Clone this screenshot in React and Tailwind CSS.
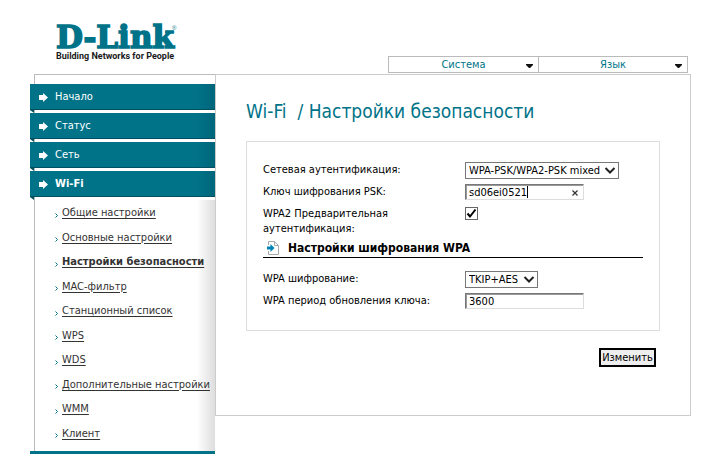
import React, { useState } from 'react';

const sections = ['Начало', 'Статус', 'Сеть', 'Wi-Fi'];

const wifiPages = [
  'Общие настройки',
  'Основные настройки',
  'Настройки безопасности',
  'MAC-фильтр',
  'Станционный список',
  'WPS',
  'WDS',
  'Дополнительные настройки',
  'WMM',
  'Клиент',
];

const Logo = () => (
  <a href="#" aria-label="D-Link" className="block pt-[22px] pl-[26px]">
    <svg width="130" height="42" viewBox="0 0 130 42" className="overflow-visible">
      <text x="0" y="26" fill="#007389" stroke="#007389" strokeWidth="1.6" fontSize="31" fontWeight="700" fontFamily="'DejaVu Serif', serif">
        D-Link
      </text>
      <text x="116" y="8" fill="#007389" fontSize="6" fontFamily="'Liberation Sans', sans-serif">®</text>
      <text x="0" y="37" fill="#1a1a1a" fontSize="9" fontWeight="700" fontFamily="Roboto, sans-serif">
        Building Networks for People
      </text>
    </svg>
  </a>
);

const TopMenu = ({ label, className }) => (
  <button type="button" className={`flex h-[17px] items-center border border-[#bbb] bg-white text-[#007389] ${className}`}>
    <span className="flex-1 pt-[2px] text-center">{label}</span>
    <svg width="7" height="4" viewBox="0 0 7 4" className="mt-[3px] mr-[5px] -ml-3">
      <path d="M0 0h7v1L4 4H3L0 1z" fill="#111" />
    </svg>
  </button>
);

const NavItem = ({ label, active }) => (
  <li className="relative mb-[3px]">
    <a
      href="#"
      className={`flex h-[26px] items-center border-b border-[#00505f] bg-linear-to-r from-[#007389] from-90% to-[#00657a] pt-[2px] pl-2 text-white ${active ? 'font-bold' : ''}`}
    >
      <svg width="10" height="9" viewBox="0 0 10 9" className="mr-[7px]">
        <path d="M1 2h4V0l5 4.5L5 9V7H1z" fill="#fff" />
      </svg>
      {label}
    </a>
    {/* folded corner */}
    <svg width="4" height="3" viewBox="0 0 4 3" className="absolute top-full left-0">
      <path d="M0 0h4v3z" fill="#00505f" />
    </svg>
  </li>
);

const SubItem = ({ label, active }) => (
  <li className="flex flex-1 items-center">
    <svg width="3" height="5" viewBox="0 0 3 5" className="mt-1 mr-1">
      <path d="M0.5 0.5l2 2-2 2" fill="none" stroke="#007389" />
    </svg>
    <a href="#" className={`whitespace-nowrap text-[#333] underline underline-offset-2 ${active ? 'font-bold' : ''}`}>
      {label}
    </a>
  </li>
);

const Sidebar = () => (
  <aside className="flex w-[185px] shrink-0 flex-col border-b-[3px] border-[#007389]">
    <div className="ml-1 border-t border-l border-[#bbb] pt-[9px]">
      <ul className="-ml-[5px]">
        {sections.map((s) => (
          <NavItem key={s} label={s} active={s === 'Wi-Fi'} />
        ))}
      </ul>
      <div className="bg-linear-to-l from-[#ddd] to-white to-10% pt-px pb-[5px]">
        <ul className="flex h-[245px] flex-col pl-5">
          {wifiPages.map((p) => (
            <SubItem key={p} label={p} active={p === 'Настройки безопасности'} />
          ))}
        </ul>
      </div>
    </div>
  </aside>
);

const Field = ({ id, label, children, className = 'h-[22px]' }) => (
  <div className={`flex items-start ${className}`}>
    <label htmlFor={id} className="w-[202px] shrink-0 pt-[2px] leading-[15px] whitespace-pre-line">
      {label}
    </label>
    {children}
  </div>
);

const Select = ({ id, value, className }) => (
  <div className={`relative mt-[2px] ${className}`}>
    <select id={id} defaultValue={value} className="block h-[17px] w-full appearance-none border border-[#777] bg-white pl-[3px] leading-[15px] outline-none">
      <option>{value}</option>
    </select>
    <svg width="12" height="8" viewBox="0 0 12 8" className="pointer-events-none absolute top-[5px] right-[3px]">
      <path d="M1.5 1l4.5 4.5L10.5 1" fill="none" stroke="#222" strokeWidth="2" />
    </svg>
  </div>
);

const inputClass =
  'block h-4 w-full border border-t-[#777] border-r-[#ddd] border-b-[#ddd] border-l-[#777] bg-white pt-px pl-[3px] leading-3 shadow-[inset_1px_1px_0_#999] outline-none';

const App = () => {
  const [psk, setPsk] = useState('sd06ei0521');
  const [preAuth, setPreAuth] = useState(true);
  const [period, setPeriod] = useState('3600');

  return (
    <div className="bg-white pr-[31px] pl-[30px] font-['DejaVu_Sans_Condensed','DejaVu_Sans',sans-serif] text-[11px] text-black">
      <header className="flex h-[74px] items-start justify-between">
        <Logo />
        <div className="mt-14 mr-[3px] flex">
          <TopMenu label="Система" className="w-[150px] border-r-0" />
          <TopMenu label="Язык" className="w-[150px]" />
        </div>
      </header>

      <div className="flex items-start">
        <Sidebar />

        <main className="min-w-0 flex-1 border border-[#ccc] px-[30px] pb-12">
          <h1 className="pt-6 text-[19px] leading-6 whitespace-pre text-[#007389]">Wi-Fi  / Настройки безопасности</h1>

          <form onSubmit={(e) => e.preventDefault()}>
            <div className="mt-[18px] border border-[#ddd] px-4 pt-[18px] pb-[17px]">
              <Field id="auth" label="Сетевая аутентификация:">
                <Select id="auth" value="WPA-PSK/WPA2-PSK mixed" className="w-[154px]" />
              </Field>
              <Field id="psk" label="Ключ шифрования PSK:">
                <div className="relative mt-[2px] w-[119px]">
                  <input id="psk" type="text" value={psk} onChange={(e) => setPsk(e.target.value)} className={inputClass} />
                  {/* text cursor */}
                  <span className="absolute top-[2px] left-[62px] h-3 w-px bg-black" />
                  <button type="button" aria-label="Очистить" onClick={() => setPsk('')} className="absolute top-[6px] right-[6px]">
                    <svg width="6" height="6" viewBox="0 0 6 6" className="block">
                      <path d="M0.5 0.5l5 5M5.5 0.5l-5 5" stroke="#333" strokeWidth="1.2" />
                    </svg>
                  </button>
                </div>
              </Field>
              <Field id="preauth" label={'WPA2 Предварительная\nаутентификация:'} className="h-[34px]">
                <span className="relative mt-[3px] block">
                  <input
                    id="preauth"
                    type="checkbox"
                    checked={preAuth}
                    onChange={(e) => setPreAuth(e.target.checked)}
                    className="block size-[13px] appearance-none border border-[#666] bg-white"
                  />
                  {preAuth && (
                    <svg width="13" height="13" viewBox="0 0 13 13" className="pointer-events-none absolute top-0 left-0">
                      <path d="M2.5 6.5l2.5 3 5.5-7" fill="none" stroke="#000" strokeWidth="2" />
                    </svg>
                  )}
                </span>
              </Field>

              <h2 className="flex h-5 items-center border-b border-black pl-1 text-[12px] font-bold">
                <svg width="12" height="14" viewBox="0 0 12 14" className="mr-[9px]">
                  <path d="M1.5 4V0.5h6l4 4v9h-10V10M7.5 0.5v4h4" fill="#fff" stroke="#aaa" />
                  <path d="M0 5.5h3.5V3L7.5 7l-4 4V8.5H0z" fill="#0083b5" />
                </svg>
                Настройки шифрования WPA
              </h2>

              <div className="pt-[11px]">
                <Field id="cipher" label="WPA шифрование:">
                  <Select id="cipher" value="TKIP+AES" className="w-[73px]" />
                </Field>
                <Field id="period" label="WPA период обновления ключа:">
                  <div className="mt-[2px] w-[119px]">
                    <input id="period" type="text" value={period} onChange={(e) => setPeriod(e.target.value)} className={inputClass} />
                  </div>
                </Field>
              </div>
            </div>

            <div className="flex justify-end pt-[17px] pr-1">
              <button type="submit" className="h-[19px] w-[57px] border-2 border-black bg-[#eee] leading-[15px]">
                Изменить
              </button>
            </div>
          </form>
        </main>
      </div>
    </div>
  );
};

export default App;
